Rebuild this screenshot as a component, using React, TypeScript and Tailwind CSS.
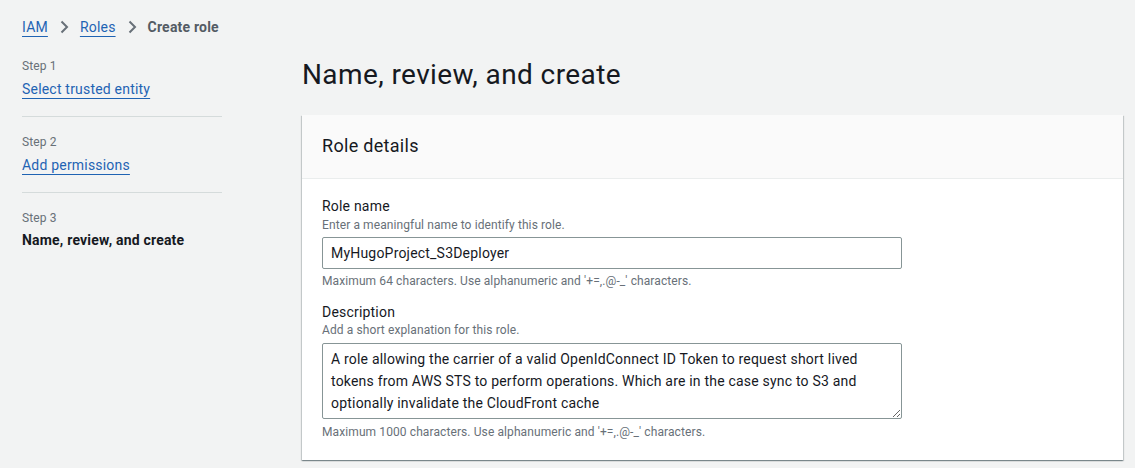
import { useState } from 'react';

const font = { fontFamily: 'Roboto, "Liberation Sans", sans-serif' };

function Chevron() {
  return (
    <svg className="w-4 h-4 text-[#687078]" viewBox="0 0 16 16" fill="none" stroke="currentColor">
      <path d="M5.5 2.5 11 8l-5.5 5.5" strokeWidth={2} strokeLinejoin="miter" />
    </svg>
  );
}

const steps = [
  { label: 'Step 1', title: 'Select trusted entity', current: false },
  { label: 'Step 2', title: 'Add permissions', current: false },
  { label: 'Step 3', title: 'Name, review, and create', current: true },
];

export default function App() {
  const [roleName, setRoleName] = useState('MyHugoProject_S3Deployer');
  const [description, setDescription] = useState(
    'A role allowing the carrier of a valid OpenIdConnect ID Token to request short lived tokens from AWS STS to perform operations. Which are in the case sync to S3 and optionally invalidate the CloudFront cache'
  );

  return (
    <div className="min-h-[468px] bg-[#f2f3f3] text-[#16191f] pl-[22px] pr-[12px] pt-[17px] tracking-[0.2px]" style={font}>
      {/* Breadcrumbs */}
      <nav className="flex items-center h-5 text-[14px] leading-5">
        <a href="#" className="text-[#1f63b3] underline underline-offset-[4px] decoration-1">IAM</a>
        <span className="mx-[8px]"><Chevron /></span>
        <a href="#" className="text-[#1f63b3] underline underline-offset-[4px] decoration-1">Roles</a>
        <span className="mx-[8px]"><Chevron /></span>
        <span className="font-bold text-[#545b64]">Create role</span>
      </nav>

      <div className="flex">
        {/* Wizard steps */}
        <ul className="w-[200px] shrink-0 mt-1">
          {steps.map((s) => (
            <li key={s.label} className={`pt-[17px] pb-[17px] ${s.current ? '' : 'border-b border-[#d5dbdb]'}`}>
              <div className="text-[12px] leading-4 text-[#687078] tracking-[0.1px]">{s.label}</div>
              {s.current ? (
                <div className="mt-[4px] text-[14px] leading-5 font-bold">{s.title}</div>
              ) : (
                <a href="#" className="block mt-[5px] text-[14px] leading-5 text-[#1f63b3] underline underline-offset-[4px] decoration-1 w-fit">
                  {s.title}
                </a>
              )}
            </li>
          ))}
        </ul>

        {/* Main content */}
        <main className="flex-1 ml-[80px]">
          <h1 className="mt-5 mb-[22px] text-[28px] leading-9 font-normal tracking-[0.4px]">Name, review, and create</h1>

          <section className="bg-white shadow-[0_1px_1px_0_rgba(0,28,36,0.3),1px_1px_1px_0_rgba(0,28,36,0.15),-1px_1px_1px_0_rgba(0,28,36,0.15)]">
            <header className="h-[64px] bg-[#fafafa] border-b border-[#eaeded] px-5 pb-[2px] flex items-center">
              <h2 className="text-[18px] leading-6 font-normal tracking-[0.3px]">Role details</h2>
            </header>

            <div className="px-5 pt-[17px] pb-5">
              <label className="block text-[14px] leading-5">Role name</label>
              <div className="mt-px text-[12px] leading-4 text-[#687078] tracking-[0.1px]">Enter a meaningful name to identify this role.</div>
              <input
                value={roleName}
                onChange={(e) => setRoleName(e.target.value)}
                className="mt-1 block w-[580px] h-[32px] px-2 border border-[#879596] rounded-[2px] text-[14px] bg-white outline-none"
                style={font}
              />
              <div className="mt-1 text-[12px] leading-4 text-[#687078] tracking-[0.1px]">
                Maximum 64 characters. Use alphanumeric and '+=,.@-_' characters.
              </div>

              <label className="block mt-[13px] text-[14px] leading-5">Description</label>
              <div className="text-[12px] leading-4 text-[#687078] tracking-[0.1px]">Add a short explanation for this role.</div>
              <textarea
                value={description}
                onChange={(e) => setDescription(e.target.value)}
                className="mt-[5px] block w-[580px] h-[76px] px-2 pt-1 border border-[#879596] rounded-[2px] text-[14px] leading-[22px] bg-white outline-none"
                style={font}
              />
              <div className="mt-[5px] text-[12px] leading-4 text-[#687078] tracking-[0.1px]">
                Maximum 1000 characters. Use alphanumeric and '+=,.@-_' characters.
              </div>
            </div>
          </section>
        </main>
      </div>
    </div>
  );
}
